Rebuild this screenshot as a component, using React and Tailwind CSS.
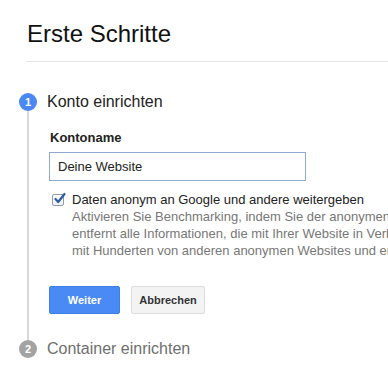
const font = { fontFamily: '"Liberation Sans", Arial, sans-serif' };

const StepBadge = ({ n, active }) => (
  <div
    className={`flex h-[18px] w-[18px] shrink-0 items-center justify-center rounded-full text-[11px] font-bold leading-none text-white ${
      active ? "bg-[#4a89f3]" : "bg-[#a3a3a3]"
    }`}
  >
    {n}
  </div>
);

const Checkbox = () => (
  <div className="relative mt-[3px] ml-[3px] h-[12px] w-[12px] shrink-0 rounded-[2px] border border-[#8f9aab] bg-gradient-to-b from-white to-[#eef1f6]">
    <svg width="13" height="13" viewBox="0 0 13 13" className="absolute -top-[3px] left-0">
      <path d="M2.5 7 L5.2 10 L11.5 2" fill="none" stroke="#2c5ca8" strokeWidth="2.2" strokeLinecap="round" strokeLinejoin="round" />
    </svg>
  </div>
);

export default function App() {
  return (
    <div className="h-[382px] w-[388px] overflow-hidden bg-white text-[#222]" style={font}>
      <div className="ml-[26px] pt-[20px]">
        <h1 className="pl-[1px] text-[24px] leading-[28px] font-normal text-[#111]">Erste Schritte</h1>
        <div className="mt-[13px] h-px bg-[#e5e5e5]" />
      </div>

      <div className="ml-[19px] mt-[31px]">
        {/* step 1 */}
        <div className="flex">
          <div className="flex w-[18px] flex-col items-center">
            <StepBadge n="1" active />
            <div className="w-[2px] flex-1 bg-[#d9d9d9]" />
          </div>
          <div className="ml-[10px] pb-[26px]">
            <div className="text-[16px] leading-[18px] text-[#222]">Konto einrichten</div>
            <div className="ml-[2px] mt-[19px]">
              <div className="pl-[1px] text-[13px] font-bold leading-[16px] text-[#222]">Kontoname</div>
              <input
                readOnly
                value="Deine Website"
                className="mt-[6px] block h-[29px] w-[257px] border border-[#8fabd0] px-[8px] text-[13px] text-[#222] outline-none"
                style={font}
              />
              <div className="mt-[10px] flex gap-[8px]">
                <Checkbox />
                <div className="text-[13px] leading-[17px] whitespace-nowrap">
                  <div className="text-[#222]">Daten anonym an Google und andere weitergeben</div>
                  <div className="text-[#777]">
                    Aktivieren Sie Benchmarking, indem Sie der anonymen Weitergabe Ihrer Daten zustimmen.
                  </div>
                  <div className="text-[#777]">
                    entfernt alle Informationen, die mit Ihrer Website in Verbindung gebracht werden können,
                  </div>
                  <div className="text-[#777]">
                    mit Hunderten von anderen anonymen Websites und erstellt so Branchentrends.
                  </div>
                </div>
              </div>
              <div className="mt-[27px] flex gap-[11px]">
                <button className="h-[28px] w-[71px] rounded-[2px] border border-[#3f7ee8] bg-[#4a8af4] text-[11px] font-bold text-white">
                  Weiter
                </button>
                <button className="h-[28px] w-[74px] rounded-[2px] border border-[#dcdcdc] bg-[#f3f3f3] text-[11px] font-bold text-[#333]">
                  Abbrechen
                </button>
              </div>
            </div>
          </div>
        </div>

        {/* step 2 */}
        <div className="flex items-center">
          <StepBadge n="2" />
          <div className="ml-[10px] text-[16px] leading-[18px] text-[#6f6f6f]">Container einrichten</div>
        </div>
      </div>
    </div>
  );
}
